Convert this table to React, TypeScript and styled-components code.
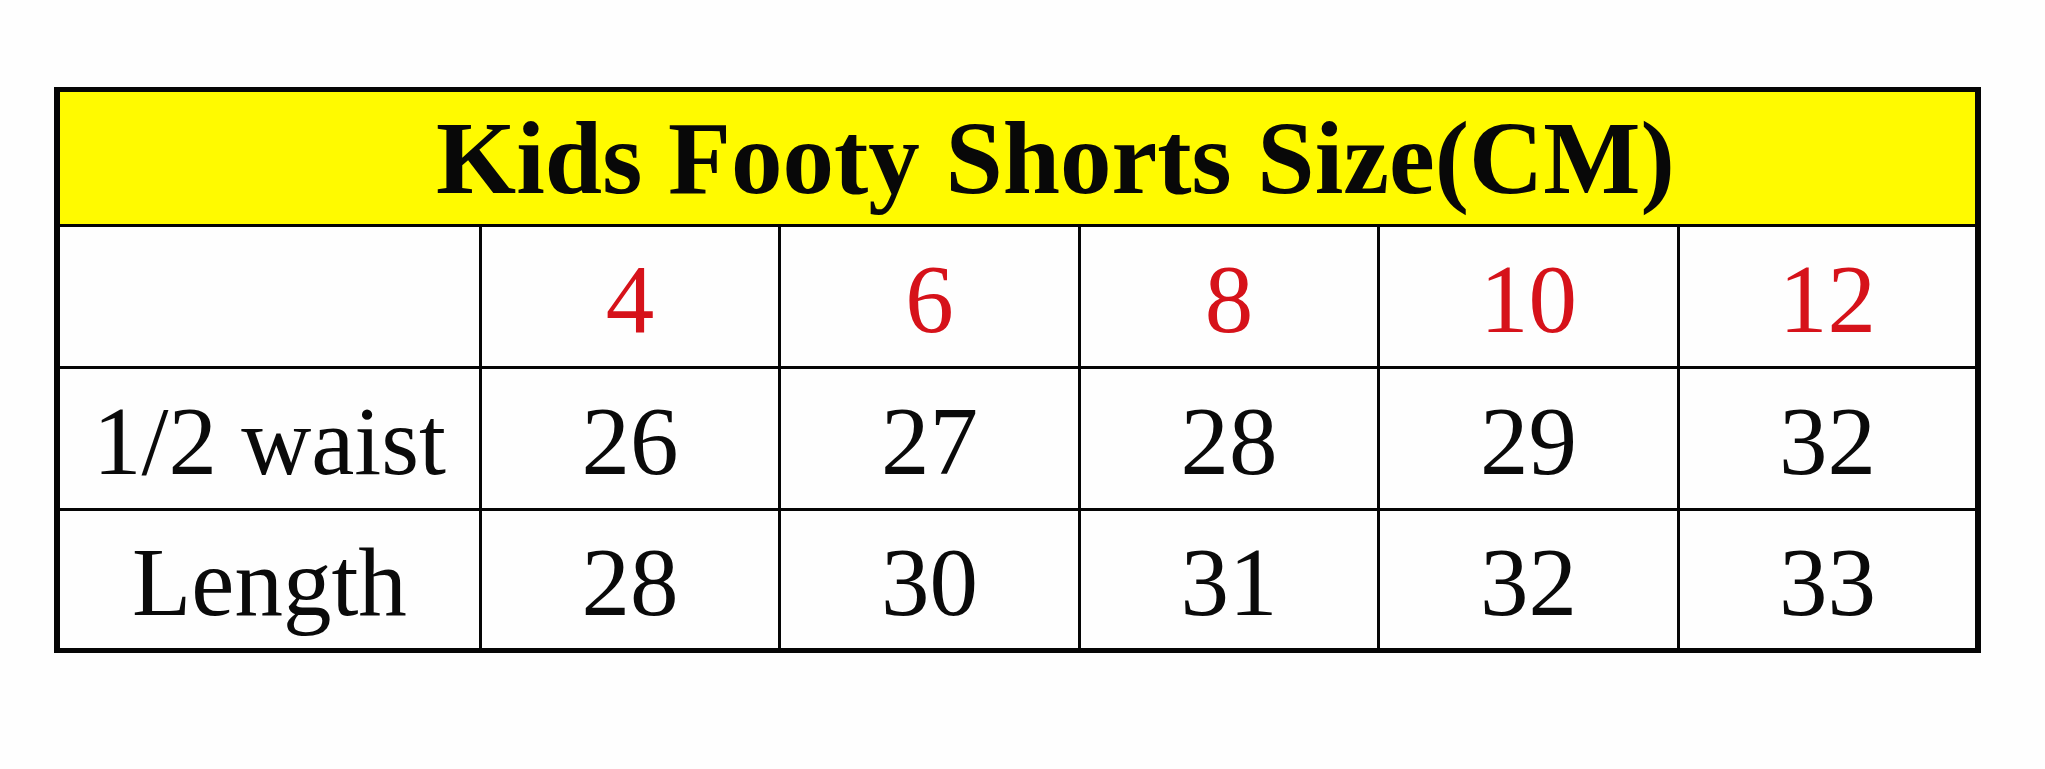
import styled, { createGlobalStyle } from "styled-components";

const GlobalStyle = createGlobalStyle`
  html, body {
    margin: 0;
    padding: 0;
    background: #fefefe;
  }
`;

const sizes = ["4", "6", "8", "10", "12"];

const rows = [
  { label: "1/2 waist", values: ["26", "27", "28", "29", "32"] },
  { label: "Length", values: ["28", "30", "31", "32", "33"] },
];

export default function App() {
  return (
    <>
      <GlobalStyle />
      <Page>
        <SizeTable>
          <Title>Kids Footy Shorts Size(CM)</Title>
          <Cell />
          {sizes.map((s) => (
            <Cell key={s} $red>
              {s}
            </Cell>
          ))}
          {rows.map((row) => (
            <Row key={row.label} label={row.label} values={row.values} />
          ))}
        </SizeTable>
      </Page>
    </>
  );
}

function Row({ label, values }: { label: string; values: string[] }) {
  return (
    <>
      <Cell>{label}</Cell>
      {values.map((v, i) => (
        <Cell key={i}>{v}</Cell>
      ))}
    </>
  );
}

const Page = styled.div`
  width: 2045px;
  height: 769px;
  padding: 87px 0 0 54px;
  box-sizing: border-box;
  font-family: "Liberation Serif", "Times New Roman", serif;
`;

const SizeTable = styled.div`
  display: grid;
  grid-template-columns: 419px 296px 297px 296px 297px 295px;
  grid-template-rows: 132px 139px 139px 137px;
  gap: 3px;
  width: max-content;
  background: #050505;
  border-style: solid;
  border-color: #050505;
  border-width: 5px 6px;
`;

const Title = styled.div`
  grid-column: 1 / -1;
  display: flex;
  align-items: center;
  justify-content: center;
  padding-left: 76px;
  background: #fffa00;
  color: #080808;
  font-weight: 700;
  font-size: 103px;
  white-space: nowrap;
`;

const Cell = styled.div<{ $red?: boolean }>`
  display: flex;
  align-items: center;
  justify-content: center;
  padding-top: 6px;
  box-sizing: border-box;
  background: #fefefe;
  color: ${(p) => (p.$red ? "#d6121a" : "#0a0a0a")};
  font-size: 97px;
  white-space: nowrap;
`;
